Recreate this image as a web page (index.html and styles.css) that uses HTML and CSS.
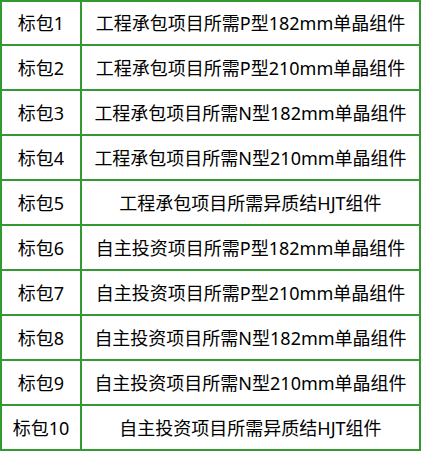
FILE: index.html
```html
<!DOCTYPE html>
<html lang="zh-CN">
<head>
<meta charset="utf-8">
<title>标包</title>
<link rel="stylesheet" href="styles.css">
</head>
<body>
<div class="table">
  <div class="row"><div class="cell c1">标包1</div><div class="cell c2">工程承包项目所需P型182mm单晶组件</div></div>
  <div class="row"><div class="cell c1">标包2</div><div class="cell c2">工程承包项目所需P型210mm单晶组件</div></div>
  <div class="row"><div class="cell c1">标包3</div><div class="cell c2">工程承包项目所需N型182mm单晶组件</div></div>
  <div class="row"><div class="cell c1">标包4</div><div class="cell c2">工程承包项目所需N型210mm单晶组件</div></div>
  <div class="row"><div class="cell c1">标包5</div><div class="cell c2">工程承包项目所需异质结HJT组件</div></div>
  <div class="row"><div class="cell c1">标包6</div><div class="cell c2">自主投资项目所需P型182mm单晶组件</div></div>
  <div class="row"><div class="cell c1">标包7</div><div class="cell c2">自主投资项目所需P型210mm单晶组件</div></div>
  <div class="row"><div class="cell c1">标包8</div><div class="cell c2">自主投资项目所需N型182mm单晶组件</div></div>
  <div class="row"><div class="cell c1">标包9</div><div class="cell c2">自主投资项目所需N型210mm单晶组件</div></div>
  <div class="row"><div class="cell c1">标包10</div><div class="cell c2">自主投资项目所需异质结HJT组件</div></div>
</div>
</body>
</html>
```
FILE: styles.css
```css
html, body {
  margin: 0;
  padding: 0;
  background: #ffffff;
}
.table {
  width: 421px;
  box-sizing: border-box;
  border-top: 2px solid #339933;
  border-left: 2px solid #339933;
  font-family: "Noto Sans", "Noto Sans CJK SC", sans-serif;
  font-size: 18px;
  color: #000000;
}
.row {
  display: grid;
  grid-template-columns: 80px 339px;
  height: 45px;
}
.row:first-child {
  height: 44px;
}
.cell {
  box-sizing: border-box;
  border-right: 2px solid #339933;
  border-bottom: 2px solid #339933;
  display: flex;
  align-items: center;
  justify-content: center;
  white-space: nowrap;
  line-height: 1;
}
```
